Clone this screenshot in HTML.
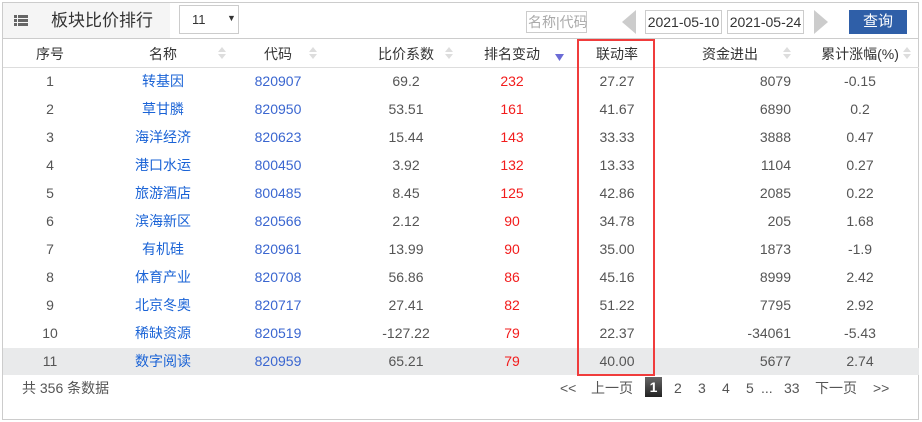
<!DOCTYPE html><html><head><meta charset="utf-8"><style>
*{margin:0;padding:0;box-sizing:border-box}
body{width:922px;height:422px;background:#fff;font-family:"Liberation Sans","Noto Sans CJK SC",sans-serif;font-size:14px;color:#555;position:relative;overflow:hidden}
.a{position:absolute;white-space:nowrap}
.t{line-height:16px;height:16px}
.frame{position:absolute;left:2px;top:2px;width:917px;height:418px;border:1px solid #ccc}
.c{text-align:center}
.r{text-align:right}
.blue{color:#1a63d6}
.red{color:#f21c1c}
.arr{position:absolute;width:8px;height:14px}
.arr:before,.arr:after{content:"";position:absolute;left:0;border-left:4px solid transparent;border-right:4px solid transparent}
.arr:before{top:0;border-bottom:5px solid #ddd}
.arr:after{top:7px;border-top:5px solid #ddd}
</style></head><body>
<div class="frame"></div>
<div class="a" style="left:3px;top:3px;width:167px;height:35px;background:#f5f5f5"></div>
<div class="a" style="left:3px;top:38px;width:916px;height:1px;background:#ccc"></div>
<svg class="a" style="left:14px;top:15px" width="14" height="11"><g fill="#666"><rect x="0" y="0" width="3" height="3"/><rect x="4" y="0" width="10" height="3"/><rect x="0" y="4" width="3" height="3"/><rect x="4" y="4" width="10" height="3"/><rect x="0" y="8" width="3" height="3"/><rect x="4" y="8" width="10" height="3"/></g></svg>
<div class="a" style="left:51px;top:11px;font-size:17px;line-height:20px;color:#333">板块比价排行</div>
<div class="a" style="left:179px;top:5px;width:60px;height:29px;border:1px solid #ccc;background:#fff"><span class="a" style="left:12px;top:6px;font-size:13px;color:#333">11</span><span class="a" style="left:47px;top:7px;font-size:9px;color:#333">▼</span></div>
<div class="a" style="left:526px;top:11px;width:61px;height:22px;border:1px solid #ccc;color:#aaa;font-size:14px;padding:1px 1px;line-height:18px">名称|代码</div>
<svg class="a" style="left:622px;top:10px" width="14" height="24"><polygon points="14,0 14,24 0,12" fill="#ccc"/></svg>
<div class="a" style="left:645px;top:10px;width:77px;height:24px;border:1px solid #ccc;font-size:14px;color:#333;line-height:22px;text-align:center">2021-05-10</div>
<div class="a" style="left:727px;top:10px;width:77px;height:24px;border:1px solid #ccc;font-size:14px;color:#333;line-height:22px;text-align:center">2021-05-24</div>
<svg class="a" style="left:814px;top:10px" width="14" height="24"><polygon points="0,0 0,24 14,12" fill="#ccc"/></svg>
<div class="a c" style="left:849px;top:10px;width:58px;height:24px;background:#2f5fa8;color:#fff;font-size:15px;line-height:24px">查询</div>
<div class="a" style="left:3px;top:67px;width:916px;height:1px;background:#ddd"></div>
<div class="a" style="left:3px;top:348px;width:916px;height:27px;background:#e9eaeb"></div>
<div id="hdr"></div>
<div id="rows"></div>
<div class="a" style="left:577px;top:39px;width:78px;height:337px;border:2px solid #f03c3c"></div>
<div class="a t" style="left:22px;top:380px;font-size:14px;color:#555">共 356 条数据</div>
<div class="a t" style="left:560px;top:380px;font-size:14px;color:#555">&lt;&lt;</div>
<div class="a t" style="left:591px;top:380px;font-size:14px;color:#555">上一页</div>
<div class="a c" style="left:645px;top:377px;width:17px;height:20px;background:linear-gradient(#666,#222);color:#fff;font-size:14px;line-height:20px;font-weight:bold">1</div>
<div class="a t" style="left:674px;top:380px;color:#555">2</div>
<div class="a t" style="left:698px;top:380px;color:#555">3</div>
<div class="a t" style="left:722px;top:380px;color:#555">4</div>
<div class="a t" style="left:746px;top:380px;color:#555">5</div>
<div class="a t" style="left:761px;top:380px;color:#555">...</div>
<div class="a t" style="left:784px;top:380px;color:#555">33</div>
<div class="a t" style="left:815px;top:380px;color:#555">下一页</div>
<div class="a t" style="left:873px;top:380px;color:#555">&gt;&gt;</div>
<script>
var H=[["序号",50],["名称",163],["代码",278],["比价系数",406],["排名变动",512],["联动率",617],["资金进出",730],["累计涨幅(%)",860]];
var h='';H.forEach(function(x){h+='<div class="a c t" style="left:'+(x[1]-60)+'px;width:120px;top:46px;color:#333;font-size:14px">'+x[0]+'</div>'});
[222,313,449,787,907].forEach(function(x){h+='<div class="arr" style="left:'+(x-4)+'px;top:47px"></div>'});
h+='<svg class="a" style="left:555px;top:54px" width="9" height="7"><polygon points="0,0 9,0 4.5,7" fill="#6b6bd6"/></svg>';
document.getElementById('hdr').innerHTML=h;
var D=[["转基因","820907","69.2","232","27.27","8079","-0.15"],["草甘膦","820950","53.51","161","41.67","6890","0.2"],["海洋经济","820623","15.44","143","33.33","3888","0.47"],["港口水运","800450","3.92","132","13.33","1104","0.27"],["旅游酒店","800485","8.45","125","42.86","2085","0.22"],["滨海新区","820566","2.12","90","34.78","205","1.68"],["有机硅","820961","13.99","90","35.00","1873","-1.9"],["体育产业","820708","56.86","86","45.16","8999","2.42"],["北京冬奥","820717","27.41","82","51.22","7795","2.92"],["稀缺资源","820519","-127.22","79","22.37","-34061","-5.43"],["数字阅读","820959","65.21","79","40.00","5677","2.74"]];
var s='';D.forEach(function(d,i){var t=73+28*i;
s+='<div class="a c t" style="left:10px;width:80px;top:'+t+'px">'+(i+1)+'</div>';
s+='<div class="a c t blue" style="left:113px;width:100px;top:'+t+'px">'+d[0]+'</div>';
s+='<div class="a c t" style="left:228px;width:100px;top:'+t+'px;color:#3a66d0">'+d[1]+'</div>';
s+='<div class="a c t" style="left:346px;width:120px;top:'+t+'px">'+d[2]+'</div>';
s+='<div class="a c t red" style="left:472px;width:80px;top:'+t+'px">'+d[3]+'</div>';
s+='<div class="a c t" style="left:577px;width:80px;top:'+t+'px">'+d[4]+'</div>';
s+='<div class="a r t" style="left:690px;width:101px;top:'+t+'px">'+d[5]+'</div>';
s+='<div class="a c t" style="left:810px;width:100px;top:'+t+'px">'+d[6]+'</div>';});
document.getElementById('rows').innerHTML=s;
</script>
</body></html>
